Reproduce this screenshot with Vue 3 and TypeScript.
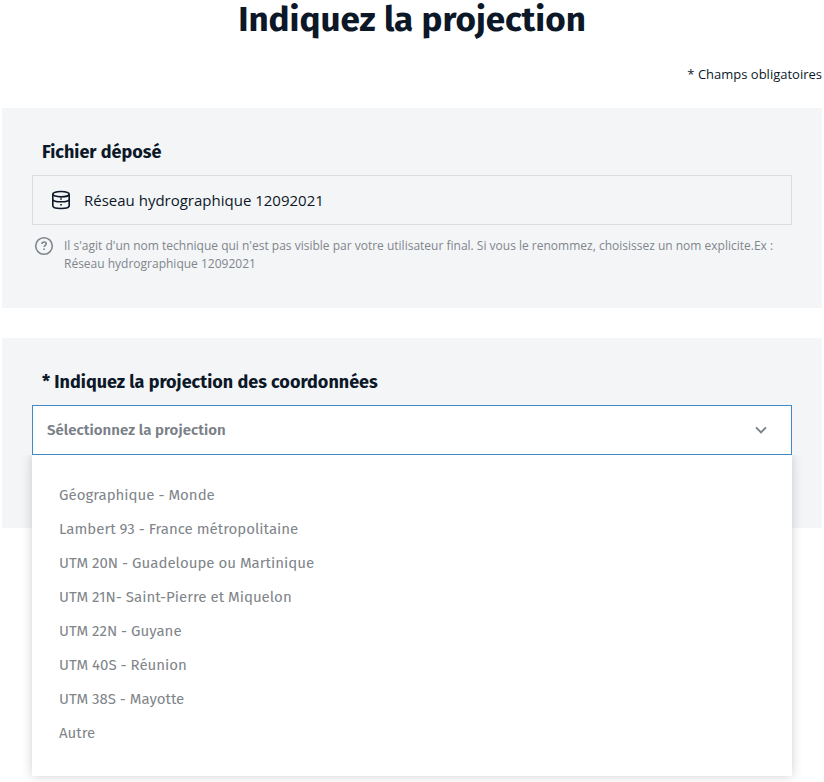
<script setup lang="ts">
import { ref } from 'vue'

const fileName = ref('Réseau hydrographique 12092021')

const projections: string[] = [
  'Géographique - Monde',
  'Lambert 93 - France métropolitaine',
  'UTM 20N - Guadeloupe ou Martinique',
  'UTM 21N- Saint-Pierre et Miquelon',
  'UTM 22N - Guyane',
  'UTM 40S - Réunion',
  'UTM 38S - Mayotte',
  'Autre',
]
</script>

<template>
  <main class="page">
    <h1 class="title">Indiquez la projection</h1>
    <p class="required">* Champs obligatoires</p>

    <section class="panel">
      <h2 class="label">Fichier déposé</h2>
      <div class="field file">
        <svg class="db" width="20" height="20" viewBox="0 0 20 20" fill="none" stroke="currentColor" stroke-width="1.6">
          <ellipse cx="10" cy="4.2" rx="8.2" ry="2.7" />
          <path d="M1.8 4.2v11.6c0 1.6 3.7 2.7 8.2 2.7s8.2-1.1 8.2-2.7V4.2M1.8 9.2c0 1.6 3.7 2.6 8.2 2.6s8.2-1 8.2-2.6" />
          <path d="M10 8.2v1.6M10 13.9v1.6" />
        </svg>
        <span>{{ fileName }}</span>
      </div>
      <div class="hint">
        <svg width="20" height="20" viewBox="0 0 20 20" fill="none" stroke="currentColor" stroke-width="1.6">
          <circle cx="10" cy="10" r="8.3" />
          <path d="M7.9 8c.1-1.3 1-2 2.2-2s2.1.7 2.1 1.8c0 1.5-2 1.6-2 3.2M10.1 12.5v1.6" stroke-width="1.7" />
        </svg>
        <p>Il s'agit d'un nom technique qui n'est pas visible par votre utilisateur final. Si vous le renommez, choisissez un nom explicite.Ex :<br>Réseau hydrographique 12092021</p>
      </div>
    </section>

    <section class="panel projection">
      <h2 class="label">* Indiquez la projection des coordonnées</h2>
      <div class="select">
        <button type="button" class="field trigger">
          <span>Sélectionnez la projection</span>
          <svg width="12" height="8" viewBox="0 0 12 8" fill="none" stroke="currentColor" stroke-width="1.9">
            <path d="M1 1.3l5 5 5-5" />
          </svg>
        </button>
        <ul class="menu">
          <li v-for="p in projections" :key="p">{{ p }}</li>
        </ul>
      </div>
    </section>
  </main>
</template>

<style>
body {
  background: #fff;
}
</style>

<style scoped>
.page {
  box-sizing: border-box;
  height: 782px;
  padding: 0 2px;
  overflow: hidden;
  font-family: "Open Sans", "Noto Sans", sans-serif;
  color: #0c1828;
}
.title {
  margin: 0;
  height: 64px;
  line-height: 39px;
  text-align: center;
  font-family: "Fira Sans", "Open Sans", sans-serif;
  font-size: 35px;
  font-weight: 700;
  white-space: nowrap;
}
.required {
  margin: 0;
  height: 44px;
  line-height: 20px;
  font-size: 13px;
  text-align: right;
}
.panel {
  box-sizing: border-box;
  height: 200px;
  padding: 30px 30px 0;
  background: #f4f5f7;
}
.projection {
  height: 190px;
  margin-top: 30px;
}
.label {
  margin: 0;
  padding-left: 10px;
  height: 37px;
  line-height: 29px;
  font-family: "Fira Sans", "Open Sans", sans-serif;
  font-size: 18px;
  font-weight: 700;
  white-space: nowrap;
}
.field {
  box-sizing: border-box;
  display: flex;
  align-items: center;
  width: 100%;
  height: 50px;
  border: 1px solid #d9dde1;
}
.file {
  gap: 13px;
  padding-left: 18px;
  font-size: 15px;
}
.hint {
  display: flex;
  gap: 10px;
  padding: 11px 0 0 2px;
  color: #80868c;
}
.hint p {
  margin: 1px 0 0;
  font-size: 12px;
  line-height: 18px;
  white-space: nowrap;
}
.select {
  position: relative;
}
.trigger {
  justify-content: space-between;
  padding: 0 24px 0 14px;
  border-color: #4189c5;
  background: #fff;
  color: #7a8087;
  font-family: "Fira Sans", "Open Sans", sans-serif;
  font-size: 15px;
  font-weight: 600;
  letter-spacing: 0.04px;
}
.menu {
  position: absolute;
  top: 100%;
  left: 0;
  box-sizing: border-box;
  width: 100%;
  height: 321px;
  margin: 0;
  padding: 23px 27px;
  list-style: none;
  background: #fff;
  box-shadow: 0 0 10px rgba(40, 45, 55, 0.22);
  clip-path: inset(0 -12px -12px);
  color: #80858a;
  font-family: "Fira Sans", "Open Sans", sans-serif;
  font-size: 15px;
}
.menu li {
  height: 34px;
  line-height: 34px;
  white-space: nowrap;
}
</style>
